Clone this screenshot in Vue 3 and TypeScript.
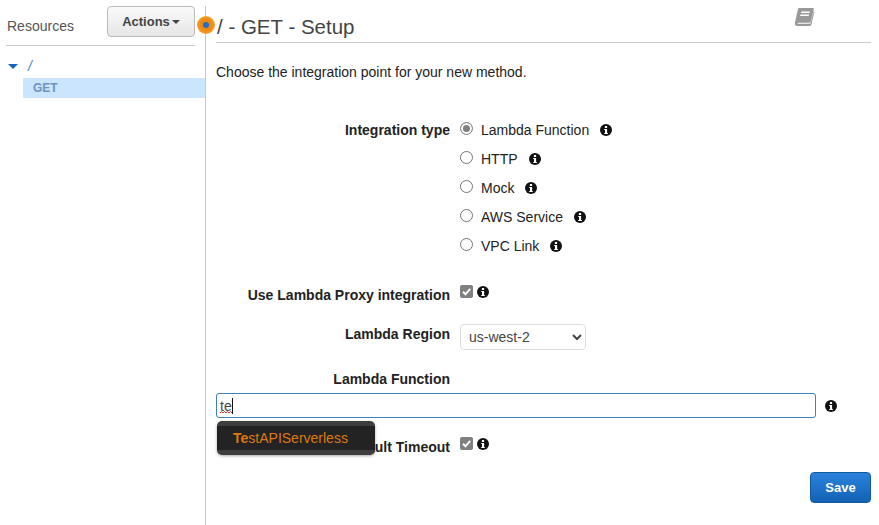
<script setup lang="ts">
const integrationTypes = [
  { label: 'Lambda Function', checked: true },
  { label: 'HTTP', checked: false },
  { label: 'Mock', checked: false },
  { label: 'AWS Service', checked: false },
  { label: 'VPC Link', checked: false },
]
</script>

<template>
  <div class="page">
    <aside class="sidebar">
      <div class="side-head">
        <span class="side-title">Resources</span>
        <button class="actions" type="button">Actions<i class="caret"></i></button>
      </div>
      <div class="tree-root">
        <i class="tree-arrow"></i>
        <span class="tree-slash">/</span>
      </div>
      <div class="tree-method">GET</div>
    </aside>

    <main class="main">
      <span class="step-dot"><i></i></span>
      <header class="head">
        <h1>/ - GET - Setup</h1>
        <svg class="book" width="21" height="20" viewBox="0 0 21 20">
          <path fill="#999" d="M5.2 1h13.6c.9 0 1.2.6 1 1.4l-3.1 12.4c-.2.7-.7 1-1.4 1H4.3c-.9 0-1.1.8-.3 1h11.600c.5 0 .9-.3 1.100-.7l3-11.700.7.500-3 12.600c-.2.9-.9 1.500-1.800 1.500H3.400C1.500 19 .4 17.500 1 15.600L4 2c.1-.6.600-1 1.200-1z"/>
          <path fill="#fff" d="M7.400 4.500h8.600l-.4 1.500H7zM6.500 7.500h8.600l-.4 1.500H6.100z"/>
        </svg>
      </header>
      <p class="intro">Choose the integration point for your new method.</p>

      <section class="row row-types">
        <label class="label">Integration type</label>
        <div class="radios">
          <div v-for="item in integrationTypes" :key="item.label" class="radio-row">
            <span class="radio" :class="{ on: item.checked }"></span>
            <span class="radio-text">{{ item.label }}</span>
            <svg class="info" viewBox="0 0 12 12" width="12" height="12">
              <circle cx="6" cy="6" r="6" fill="#111" />
              <rect x="4.900" y="2" width="2.200" height="2" fill="#fff" />
              <path d="M4.200 5h2.900v4h.8v1.100H4.200V9H5V6.100h-.8z" fill="#fff" />
            </svg>
          </div>
        </div>
      </section>

      <section class="row row-proxy">
        <label class="label">Use Lambda Proxy integration</label>
        <div class="check-wrap">
          <span class="check">
            <svg viewBox="0 0 13 13" width="13" height="13"><path d="M3 6.800l2.500 2.500L10.200 3.800" fill="none" stroke="#fff" stroke-width="2" /></svg>
          </span>
          <svg class="info" viewBox="0 0 12 12" width="12" height="12">
            <circle cx="6" cy="6" r="6" fill="#111" />
            <rect x="4.900" y="2" width="2.200" height="2" fill="#fff" />
            <path d="M4.200 5h2.900v4h.8v1.100H4.200V9H5V6.100h-.8z" fill="#fff" />
          </svg>
        </div>
      </section>

      <section class="row row-region">
        <label class="label">Lambda Region</label>
        <select class="region">
          <option>us-west-2</option>
        </select>
      </section>

      <section class="row row-fn">
        <label class="label">Lambda Function</label>
      </section>

      <section class="fn-field">
        <div class="fn-wrap">
          <input class="fn-input" type="text" value="te" />
          <svg class="squiggle" width="12" height="3" viewBox="0 0 12 3">
            <path d="M0 2l1.500-1.500L3 2l1.500-1.500L6 2l1.500-1.500L9 2l1.500-1.500L12 2" fill="none" stroke="#d33" stroke-width="1" />
          </svg>
          <i class="text-caret"></i>
          <div class="suggest">
            <div class="suggest-item"><b>Te</b>stAPIServerless</div>
          </div>
        </div>
        <svg class="info" viewBox="0 0 12 12" width="12" height="12">
          <circle cx="6" cy="6" r="6" fill="#111" />
          <rect x="4.900" y="2" width="2.200" height="2" fill="#fff" />
          <path d="M4.200 5h2.900v4h.8v1.100H4.200V9H5V6.100h-.8z" fill="#fff" />
        </svg>
      </section>

      <section class="row row-timeout">
        <label class="label">Use Default Timeout</label>
        <div class="check-wrap">
          <span class="check">
            <svg viewBox="0 0 13 13" width="13" height="13"><path d="M3 6.800l2.500 2.500L10.200 3.800" fill="none" stroke="#fff" stroke-width="2" /></svg>
          </span>
          <svg class="info" viewBox="0 0 12 12" width="12" height="12">
            <circle cx="6" cy="6" r="6" fill="#111" />
            <rect x="4.900" y="2" width="2.200" height="2" fill="#fff" />
            <path d="M4.200 5h2.900v4h.8v1.100H4.200V9H5V6.100h-.8z" fill="#fff" />
          </svg>
        </div>
      </section>

      <div class="foot">
        <button class="save" type="button">Save</button>
      </div>
    </main>
  </div>
</template>

<style>
html,
body {
  margin: 0;
  background: #fff;
  overflow: hidden;
}
</style>

<style scoped>
.page {
  display: flex;
  width: 879px;
  height: 525px;
  font-family: "Liberation Sans", Arial, sans-serif;
  font-size: 14px;
  color: #222;
}

.sidebar {
  width: 205px;
  flex: none;
  border-right: 1px solid #c8c8c8;
  margin-top: 6px;
}

.side-head {
  display: flex;
  justify-content: space-between;
  align-items: flex-start;
  height: 38px;
  margin: 0 10px 0 6px;
  padding-bottom: 1px;
  border-bottom: 1px solid #ccc;
}

.side-title {
  margin: 12px 0 0 1px;
  font-size: 14px;
  color: #555;
}

.actions {
  display: flex;
  align-items: center;
  justify-content: center;
  width: 88px;
  height: 31px;
  padding: 0;
  border: 1px solid #bbb;
  border-radius: 4px;
  background: linear-gradient(#fafafa, #e6e6e6);
  font: bold 13px "Liberation Sans", Arial, sans-serif;
  color: #444;
}

.caret {
  width: 0;
  height: 0;
  margin-left: 2px;
  border: 4px solid transparent;
  border-top-color: #444;
  border-bottom: 0;
}

.tree-root {
  display: flex;
  align-items: center;
  height: 20px;
  margin-top: 10px;
  padding-left: 8px;
}

.tree-arrow {
  width: 0;
  height: 0;
  border: 5px solid transparent;
  border-top-color: #1166bb;
  border-bottom: 0;
}

.tree-slash {
  margin-left: 10px;
  font-style: italic;
  color: #4a7fc0;
}

.tree-method {
  height: 20px;
  margin: 2px 0 0 23px;
  padding-left: 10px;
  background: #cce5ff;
  font-size: 12px;
  font-weight: bold;
  line-height: 20px;
  color: #6b93c4;
}

.main {
  position: relative;
  flex: 1;
  padding: 0 8px 0 10px;
}

.step-dot {
  position: absolute;
  left: -9px;
  top: 16px;
  display: flex;
  align-items: center;
  justify-content: center;
  width: 18px;
  height: 18px;
  border-radius: 50%;
  background: radial-gradient(#ee8a14 45%, #f6ab3a 78%, #fbc777 100%);
}

.step-dot i {
  width: 6px;
  height: 6px;
  border-radius: 50%;
  background: #1f6fc4;
}

.head {
  display: flex;
  justify-content: space-between;
  height: 42px;
  border-bottom: 1px solid #ccc;
}

.head h1 {
  margin: 15px 0 0 1px;
  font-size: 20.500px;
  font-weight: normal;
  line-height: 24px;
  color: #444;
}

.book {
  margin: 7px 56px 0 0;
}

.intro {
  margin: 20px 0 0;
  line-height: 18px;
}

.row {
  display: grid;
  grid-template-columns: 234px 1fr;
  column-gap: 10px;
  align-items: start;
}

.label {
  font-weight: bold;
  text-align: right;
}

.row-types {
  margin-top: 34px;
}

.row-types .label {
  margin-top: 7px;
}

.radio-row {
  display: flex;
  align-items: center;
  height: 29px;
}

.radio {
  box-sizing: border-box;
  width: 13px;
  height: 13px;
  margin: -3px 8px 0 0;
  border: 1px solid #767676;
  border-radius: 50%;
  background: #fff;
}

.radio.on {
  border-color: #8a8a8a;
  box-shadow: inset 0 0 0 2px #fff;
  background: #808080;
}

.radio-text {
  color: #222;
  margin-right: 11px;
}

.info {
  flex: none;
}

.row-proxy {
  height: 26px;
  margin-top: 19px;
}

.row-proxy .label {
  margin-top: 8px;
}

.row-proxy .check-wrap {
  margin-top: 6px;
}

.check-wrap {
  display: flex;
  align-items: center;
  gap: 4px;
}

.check {
  width: 13px;
  height: 13px;
  border-radius: 2px;
  background: #808080;
}

.check svg {
  display: block;
}

.row-region {
  margin-top: 19px;
}

.row-region .label {
  margin-top: 2px;
}

.region {
  box-sizing: border-box;
  width: 126px;
  height: 26px;
  padding-left: 4px;
  border: 1px solid #ddd;
  border-radius: 4px;
  background: #fff;
  font: 14px "Liberation Sans", Arial, sans-serif;
  color: #444;
}

.row-fn {
  height: 18px;
  margin-top: 20px;
}

.row-fn .label {
  margin-top: 1px;
}

.fn-field {
  display: flex;
  align-items: center;
  height: 25px;
  margin-top: 5px;
}

.fn-wrap {
  position: relative;
  width: 600px;
  margin-right: 9px;
}

.fn-input {
  display: block;
  box-sizing: border-box;
  width: 100%;
  height: 25px;
  padding: 0 3px;
  border: 1px solid #3f7fc4;
  border-radius: 3px;
  outline: none;
  font: 14px "Liberation Sans", Arial, sans-serif;
  color: #444;
}

.squiggle {
  position: absolute;
  left: 4px;
  top: 18px;
}

.text-caret {
  position: absolute;
  left: 16px;
  top: 5px;
  width: 1px;
  height: 16px;
  background: #111;
}

.suggest {
  position: absolute;
  left: 1px;
  top: 28px;
  width: 158px;
  box-sizing: border-box;
  padding: 5px 0;
  border-radius: 5px;
  background: #3d3d3d;
  box-shadow: 0 1px 3px rgba(0, 0, 0, 0.35);
}

.suggest-item {
  height: 24px;
  padding-left: 16px;
  background: #232323;
  line-height: 24px;
  color: #dc7a10;
}

.row-timeout {
  height: 18px;
  margin-top: 19px;
}

.row-timeout .label {
  margin-top: 2px;
}

.foot {
  display: flex;
  justify-content: flex-end;
  margin-top: 17px;
}

.save {
  width: 61px;
  height: 31px;
  padding: 0;
  border: 1px solid #125a9e;
  border-radius: 4px;
  background: linear-gradient(#2b82dc, #1162b4);
  font: bold 13px "Liberation Sans", Arial, sans-serif;
  color: #fff;
}
</style>
